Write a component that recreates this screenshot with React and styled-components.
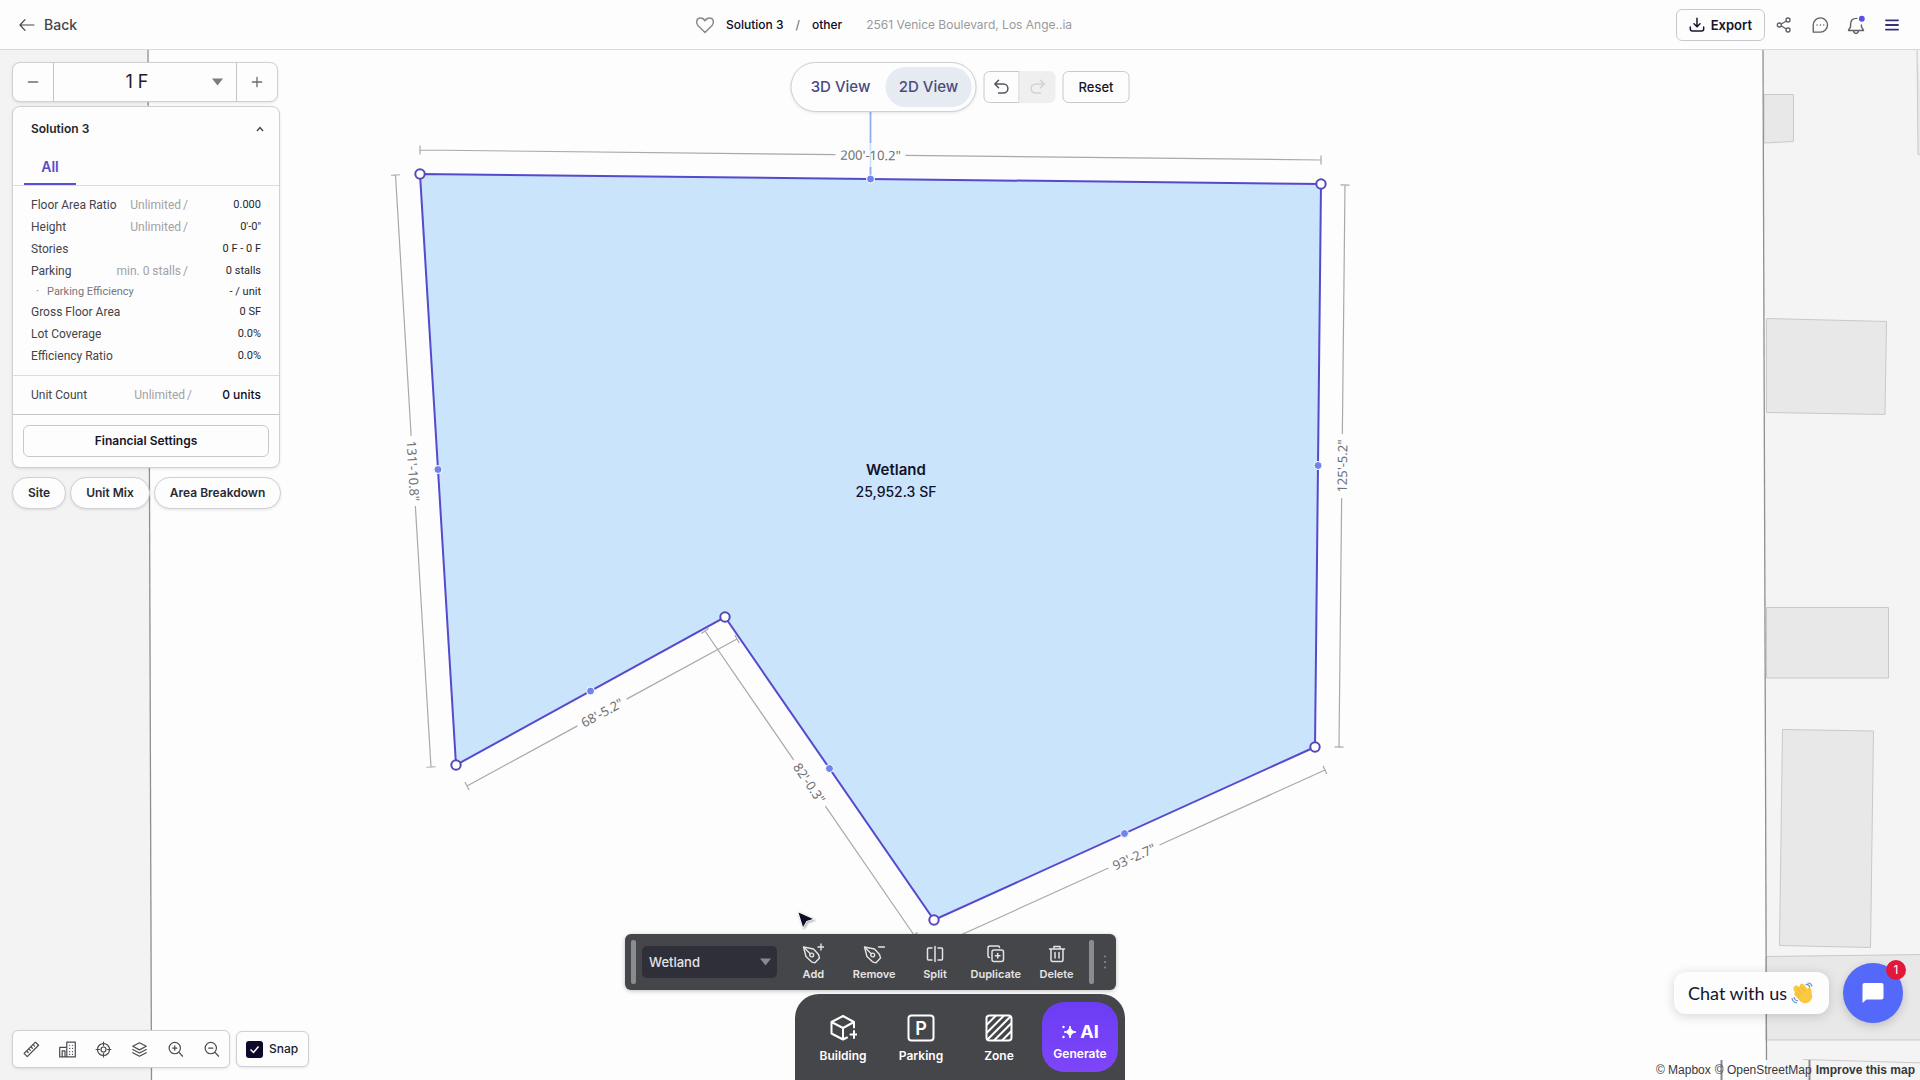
import React from "react";
import styled, { createGlobalStyle, css } from "styled-components";

const GlobalStyle = createGlobalStyle`
  *, *::before, *::after { box-sizing: border-box; }
  html, body, #root { height: 100%; margin: 0; }
  body {
    font-family: Inter, "Liberation Sans", sans-serif;
    font-size: 12px;
    line-height: 16px;
    color: #20202a;
    background: #fdfdfd;
    overflow: hidden;
  }
  button, input, select { font: inherit; color: inherit; margin: 0; }
  button { cursor: pointer; }
`;

/* ---------- shell ---------- */

const Page = styled.div`
  display: flex;
  flex-direction: column;
  height: 100vh;
`;

const Header = styled.header`
  display: grid;
  grid-template-columns: 1fr auto 1fr;
  align-items: center;
  height: 50px;
  flex: none;
  padding: 0 17px 0 19px;
  background: #fdfdfd;
  border-bottom: 1px solid #d9d9d9;
`;

const Workspace = styled.main`
  position: relative;
  flex: 1;
  min-height: 0;
`;

const flatButton = css`
  display: flex;
  align-items: center;
  justify-content: center;
  padding: 0;
  border: 0;
  background: none;
`;

const BackButton = styled.button`
  ${flatButton}
  justify-self: start;
  gap: 9px;
  font-size: 14px;
  font-weight: 500;
  color: #45454b;
`;

const Title = styled.div`
  display: flex;
  align-items: center;
  gap: 10px;
  padding-right: 156px;
  color: #0b0b26;
  font-weight: 500;
`;

const Crumbs = styled.span`
  display: flex;
  gap: 12px;
`;

const Slash = styled.span`
  color: #77777c;
`;

const Address = styled.span`
  padding-left: 14px;
  font-weight: 400;
  color: #9a9a9e;
`;

const Actions = styled.div`
  display: flex;
  align-items: center;
  justify-self: end;
  gap: 14px;
`;

const IconButton = styled.button`
  ${flatButton}
  width: 22px;
  height: 22px;
  color: ${(p) => p.$color || "#606066"};
`;

const ActionIcons = styled.div`
  display: flex;
  gap: 14px;
  margin-left: -6px;
`;

const OutlineButton = styled.button`
  display: flex;
  align-items: center;
  justify-content: center;
  gap: 6px;
  height: 32px;
  padding: 0 ${(p) => p.$pad || 12}px;
  border: 1px solid #c9c9cd;
  border-radius: 6px;
  background: #fdfdfd;
  font-size: ${(p) => p.$size || 12}px;
  font-weight: ${(p) => p.$weight || 500};
  color: #14142a;
`;

/* ---------- map ---------- */

const Canvas = styled.svg`
  position: absolute;
  inset: 0;
  width: 100%;
  height: 100%;
  display: block;
`;

const DimText = styled.text`
  font-family: "Noto Sans", sans-serif;
  font-size: 13px;
  fill: #707074;
  text-anchor: middle;
  dominant-baseline: central;
`;

const ZoneText = styled.text`
  font-size: ${(p) => p.$size}px;
  font-weight: ${(p) => p.$weight};
  fill: #12122c;
  text-anchor: middle;
  dominant-baseline: central;
`;

const GhostLine = styled.path`
  fill: none;
  stroke: #a9a9a9;
  stroke-width: 1.2;
`;

function Dimension({ from, to, label, gap = 70, flip = false }) {
  const [x1, y1] = from;
  const [x2, y2] = to;
  const len = Math.hypot(x2 - x1, y2 - y1);
  const ux = (x2 - x1) / len;
  const uy = (y2 - y1) / len;
  const cx = (x1 + x2) / 2;
  const cy = (y1 + y2) / 2;
  const angle = (Math.atan2(uy, ux) * 180) / Math.PI + (flip ? 180 : 0);
  const h = gap / 2;
  const t = 4.5;
  return (
    <g>
      <GhostLine
        d={`M${x1} ${y1}L${cx - ux * h} ${cy - uy * h}M${cx + ux * h} ${cy + uy * h}L${x2} ${y2}
        M${x1 - uy * t} ${y1 + ux * t}L${x1 + uy * t} ${y1 - ux * t}
        M${x2 - uy * t} ${y2 + ux * t}L${x2 + uy * t} ${y2 - ux * t}`}
      />
      <DimText transform={`translate(${cx} ${cy}) rotate(${angle})`}>{label}</DimText>
    </g>
  );
}

const corners = [[420, 124], [1321, 134], [1315, 697], [934, 870], [725, 567], [456, 715]];

const dimensions = [
  { from: [420, 100], to: [1321, 110], label: "200'-10.2\"" },
  { from: [395.5, 125], to: [431, 717], label: "131'-10.8\"" },
  { from: [1345, 135], to: [1339, 697], label: "125'-5.2\"", flip: true, gap: 64 },
  { from: [467, 736], to: [737, 589], label: "68'-5.2\"", gap: 56 },
  { from: [705, 581], to: [914, 885], label: "82'-0.3\"", gap: 56 },
  { from: [943, 893], to: [1325, 720], label: "93'-2.7\"", gap: 56 },
];

function SiteMap() {
  return (
    <Canvas viewBox="0 0 1920 1030" preserveAspectRatio="xMidYMin slice" aria-label="Site plan">
      <rect width="1920" height="1030" fill="#fdfdfd" />
      <path d="M0 0H148L151.500 1030H0Z" fill="#f3f3f3" />
      <path d="M148 0L151.500 1030" stroke="#8f8f93" strokeWidth="1.300" />
      <path d="M1763 0H1920V1030H1766Z" fill="#f4f4f4" />
      <g fill="#e8e8e8" stroke="#c9c9c9">
        <path d="M1764 44.500H1793.500V91.500L1764 93Z" />
        <path d="M1766.500 268.500L1886.500 271.500L1885 364.500L1766.500 362.500Z" />
        <path d="M1766.500 557.500H1888.500V628H1766.500Z" />
        <path d="M1782.500 679.500L1873.500 681L1870.500 897.500L1779.500 895.500Z" />
        <path d="M1917 -5L1918 104.500H1925" />
        <path d="M1766 906.500L1925 904.500V990H1766Z" />
        <path d="M1803 1009.500L1925 1013" fill="none" />
      </g>
      <path d="M1763 0L1766.500 1010" stroke="#8f8f93" strokeWidth="1.300" />
      <path d="M1721.500 1010V1030M1809.500 1010V1030" stroke="#88888c" strokeWidth="2" />

      <path d="M870.500 50V93" stroke="#8fb0ee" strokeWidth="1.800" />
      <path d="M870.500 93V129" stroke="#cfe3f8" strokeWidth="1.800" />
      <path d="M870.500 117V129" stroke="#8fb0ee" strokeWidth="1.800" />
      {dimensions.map((d) => (
        <Dimension key={d.label} {...d} />
      ))}
      <polygon points={corners.join(" ")} fill="#cae4fc" stroke="#5549cc" strokeWidth="2" />
      {corners.map(([x, y], i) => {
        const [nx, ny] = corners[(i + 1) % corners.length];
        return <circle key={i} cx={(x + nx) / 2} cy={(y + ny) / 2} r="4" fill="#7084ea" stroke="#fff" />;
      })}
      {corners.map(([x, y]) => (
        <circle key={x} cx={x} cy={y} r="4.700" fill="#fff" stroke="#5549b8" strokeWidth="2" />
      ))}
      <ZoneText x="896" y="419" $size={15} $weight={600}>Wetland</ZoneText>
      <ZoneText x="896" y="441" $size={14} $weight={500}>25,952.3 SF</ZoneText>
      <path
        d="M798.500 862.500L813 869L806.500 871L803 877Z"
        fill="#0d0d26"
        stroke="#fff"
        strokeWidth="1.500"
        paintOrder="stroke"
        filter="drop-shadow(1px 1px 1px rgba(0,0,0,.35))"
      />
    </Canvas>
  );
}

/* ---------- left column ---------- */

const card = css`
  background: #fdfdfd;
  border: 1px solid #cfcfd4;
  box-shadow: 0 1px 3px rgba(0, 0, 0, 0.1);
`;

const Side = styled.aside`
  position: absolute;
  top: 12px;
  left: 12px;
  display: flex;
  flex-direction: column;
  width: 268px;
`;

const Stepper = styled.div`
  ${card}
  display: grid;
  grid-template-columns: 40px 1fr 40px;
  height: 40px;
  width: 266px;
  margin-bottom: 4px;
  border-radius: 8px;
`;

const StepButton = styled.button`
  ${flatButton}
  color: #6d6d72;
`;

const SelectWrap = styled.div`
  display: grid;
  align-items: center;
  grid-template-areas: "field";
  & > * { grid-area: field; }
  & > svg { justify-self: end; margin-right: ${(p) => p.$inset}px; pointer-events: none; }
`;

const FloorSelectWrap = styled(SelectWrap)`
  border: 0 solid #c4c4c9;
  border-width: 0 1px;
`;

const FloorSelect = styled.select`
  appearance: none;
  width: 100%;
  height: 100%;
  padding: 0 16px 0 0;
  border: 0;
  background: none;
  font-size: 18px;
  text-align: center;
  text-align-last: center;
`;

const Panel = styled.section`
  ${card}
  border-radius: 8px;
`;

const PanelHead = styled.div`
  display: flex;
  align-items: center;
  justify-content: space-between;
  height: 44px;
  padding: 0 8px 0 18px;
`;

const PanelTitle = styled.h2`
  margin: 0;
  font-size: 12px;
  font-weight: 600;
  color: #26262e;
`;

const Tabs = styled.div`
  display: flex;
  padding: 0 11px;
  border-bottom: 1px solid #dcdce0;
`;

const Tab = styled.button`
  ${flatButton}
  width: 52px;
  height: 34px;
  border-bottom: 2px solid #5a50d6;
  font-size: 14px;
  font-weight: 600;
  color: #584cc8;
`;

const Stats = styled.table`
  width: 100%;
  border-collapse: collapse;
  table-layout: fixed;
  font-family: Roboto, sans-serif;
`;

const StatsBlock = styled.div`
  padding: 8px 18px;
  border-bottom: 1px solid ${(p) => p.$line};
`;

const StatRow = styled.tr`
  height: ${(p) => (p.$sub ? 19 : 22)}px;
`;

const StatName = styled.th`
  padding: 0 0 0 ${(p) => (p.$sub ? 5 : 0)}px;
  width: 84px;
  text-align: left;
  white-space: nowrap;
  font-size: ${(p) => (p.$sub ? 11 : 12)}px;
  font-weight: 400;
  color: ${(p) => (p.$sub ? "#77777c" : "#44444a")};
`;

const Bullet = styled.span`
  display: inline-block;
  width: 11px;
`;

const StatLimit = styled.td`
  padding: 0;
  text-align: right;
  white-space: nowrap;
  color: #a2a2a6;
`;

const LimitSlash = styled.span`
  padding-left: 2px;
`;

const StatValue = styled.td`
  width: ${(p) => (p.$strong ? 69 : 73)}px;
  padding: 0;
  text-align: right;
  white-space: nowrap;
  font-family: ${(p) => (p.$strong ? "Inter" : "Roboto")}, sans-serif;
  font-size: ${(p) => (p.$strong ? 12 : 11)}px;
  font-weight: ${(p) => (p.$strong ? 500 : 400)};
  color: ${(p) => (p.$strong ? "#0d0d2a" : "#26262e")};
`;

const PanelFoot = styled.div`
  display: grid;
  padding: 10px;
`;

const Pills = styled.div`
  display: flex;
  gap: 4px;
  margin-top: 9px;
`;

const Pill = styled.button`
  ${card}
  height: 32px;
  padding: 0 15px;
  border-radius: 16px;
  font-weight: 600;
  white-space: nowrap;
  color: #2a2a34;
`;

const stats = [
  ["Floor Area Ratio", "Unlimited", "0.000"],
  ["Height", "Unlimited", "0'-0\""],
  ["Stories", "", "0 F - 0 F"],
  ["Parking", "min. 0 stalls", "0 stalls"],
  ["Parking Efficiency", "", "- / unit", true],
  ["Gross Floor Area", "", "0 SF"],
  ["Lot Coverage", "", "0.0%"],
  ["Efficiency Ratio", "", "0.0%"],
];

function Stat({ name, limit, value, sub, strong }) {
  return (
    <StatRow $sub={sub}>
      <StatName scope="row" $sub={sub}>{sub && <Bullet>·</Bullet>}{name}</StatName>
      <StatLimit>{limit}{limit && <LimitSlash>/</LimitSlash>}</StatLimit>
      <StatValue $strong={strong}>{value}</StatValue>
    </StatRow>
  );
}

/* ---------- top controls ---------- */

const TopBar = styled.div`
  position: absolute;
  top: 12px;
  left: 50%;
  transform: translateX(-50%);
  display: flex;
  align-items: center;
  gap: 7px;
`;

const Toggle = styled.div`
  ${card}
  display: flex;
  height: 50px;
  padding: 4px;
  border-radius: 25px;
`;

const ToggleItem = styled.button`
  ${flatButton}
  width: ${(p) => (p.$on ? 86 : 90)}px;
  border-radius: 20px;
  background: ${(p) => (p.$on ? "#e6eaf1" : "none")};
  font-size: 15px;
  font-weight: 500;
  color: #4a4a80;
`;

const History = styled.div`
  display: flex;
  height: 32px;
`;

const HistoryButton = styled.button`
  ${flatButton}
  width: 36px;
  border: 1px solid ${(p) => (p.disabled ? "#efefef" : "#c9c9cd")};
  border-radius: ${(p) => (p.disabled ? "0 6px 6px 0" : "6px 0 0 6px")};
  background: ${(p) => (p.disabled ? "#efefef" : "#fdfdfd")};
  color: ${(p) => (p.disabled ? "#d2d2d4" : "#55555c")};
`;

/* ---------- bottom controls ---------- */

const BottomLeft = styled.div`
  position: absolute;
  left: 12px;
  bottom: 12px;
  display: flex;
  align-items: center;
  gap: 6px;
`;

const Tools = styled.div`
  ${card}
  display: flex;
  align-items: center;
  gap: 14px;
  height: 38px;
  padding: 0 7px;
  border-radius: 6px;
`;

const Snap = styled.label`
  ${card}
  display: flex;
  align-items: center;
  gap: 6px;
  height: 36px;
  padding: 0 10px 0 9px;
  border-radius: 6px;
  font-weight: 500;
`;

const CheckWrap = styled.span`
  display: grid;
  place-items: center;
  grid-template-areas: "box";
  & > * { grid-area: box; }
  & > svg { pointer-events: none; }
`;

const CheckInput = styled.input`
  appearance: none;
  width: 17px;
  height: 17px;
  border-radius: 3px;
  background: #0c0a28;
`;

const EditBar = styled.div`
  position: absolute;
  left: calc(50% - 335px);
  bottom: 90px;
  display: flex;
  align-items: center;
  width: 491px;
  height: 56px;
  padding-left: 6px;
  border-radius: 6px;
  background: #454649;
  box-shadow: 0 1px 4px rgba(0, 0, 0, 0.25);
  color: #e4e4e6;
`;

const Grip = styled.span`
  flex: none;
  width: 5px;
  height: 44px;
  border-radius: 2px;
  background: #8b8b90;
`;

const TypeSelectWrap = styled(SelectWrap)`
  flex: none;
  width: 135px;
  height: 32px;
  margin: 0 0 0 6px;
  border-radius: 5px;
  background: #2f2f39;
`;

const TypeSelect = styled.select`
  appearance: none;
  height: 100%;
  padding: 0 24px 0 7px;
  border: 0;
  background: none;
  font-size: 13px;
  font-weight: 500;
`;

const EditActions = styled.div`
  display: flex;
  flex: 1;
  padding: 0 2px 0 6px;
`;

const EditButton = styled.button`
  ${flatButton}
  flex: 1;
  flex-direction: column;
  gap: 1px;
  font-size: 11px;
  font-weight: 600;
`;

const Dock = styled.nav`
  position: absolute;
  left: 50%;
  bottom: 0;
  transform: translateX(-50%);
  display: flex;
  align-items: center;
  width: 330px;
  height: 86px;
  padding: 0 7px 0 9px;
  border-radius: 24px 24px 0 0;
  background: #454649;
  color: #fff;
`;

const DockButton = styled.button`
  ${flatButton}
  flex: none;
  flex-direction: column;
  gap: 6px;
  width: 78px;
  height: 70px;
  padding-top: 4px;
  font-size: 12px;
  font-weight: 600;
`;

const GenerateButton = styled(DockButton)`
  gap: 4px;
  width: 76px;
  margin-left: auto;
  border-radius: 22px;
  background: linear-gradient(#6a3df5, #7f45f8);
`;

const AiMark = styled.span`
  display: flex;
  align-items: center;
  gap: 4px;
  padding-top: 6px;
  font-size: 18px;
  line-height: 20px;
  font-weight: 700;
`;

/* ---------- chat and credits ---------- */

const Chat = styled.div`
  position: absolute;
  right: 17px;
  bottom: 57px;
  display: flex;
  align-items: center;
  gap: 14px;
`;

const ChatBubble = styled.div`
  display: flex;
  align-items: center;
  gap: 4px;
  height: 42px;
  padding: 0 16px 0 14px;
  border-radius: 12px;
  background: #fdfdfd;
  box-shadow: 0 2px 12px rgba(0, 0, 0, 0.16);
  font-family: Lato, sans-serif;
  font-size: 18px;
  line-height: 24px;
  color: #14142e;
`;

const ChatButton = styled.button`
  ${flatButton}
  position: relative;
  width: 60px;
  height: 60px;
  border-radius: 50%;
  background: #5468fa;
  box-shadow: 0 3px 10px rgba(0, 0, 0, 0.18);
`;

const Badge = styled.span`
  position: absolute;
  top: -3px;
  right: -3px;
  width: 20px;
  height: 20px;
  border-radius: 50%;
  background: #e2183a;
  color: #fff;
  line-height: 20px;
`;

const Credits = styled.div`
  position: absolute;
  right: 5px;
  bottom: 2px;
  display: flex;
  gap: 4px;
  font-family: "Liberation Sans", Arial, sans-serif;
  font-size: 12px;
  color: #38383c;
`;

const CreditLink = styled.a`
  color: inherit;
  text-decoration: none;
  font-weight: ${(p) => (p.$bold ? 700 : 400)};
`;

/* ---------- icons ---------- */

function Icon({ size = 20, box = 24, w = 1.6, children }) {
  return (
    <svg
      width={size}
      height={size}
      viewBox={`0 0 ${box} ${box}`}
      fill="none"
      stroke="currentColor"
      strokeWidth={w}
      strokeLinecap="round"
      strokeLinejoin="round"
      aria-hidden="true"
    >
      {children}
    </svg>
  );
}

const Caret = ({ color }) => (
  <svg width="11" height="8" viewBox="0 0 11 8" aria-hidden="true">
    <path d="M0 0.500H11L5.500 7.500Z" fill={color} />
  </svg>
);

const Nib = ({ children }) => (
  <Icon size={22} box={22} w={1.4}>
    <path d="M1.500 4L11.500 6L16.500 11.500L17.500 15L13 19.800L9.500 18.800L4 13.500Z" />
    <circle cx="9.700" cy="12" r="1.900" />
    <path d="M2 4.500L8.300 10.700" />
    {children}
  </Icon>
);

const tools = [
  ["Measure", <g><path d="M1.500 17.500L17.500 1.500L22 6L6 22Z" /><path d="M14.500 5.500l1.800 1.800M11.500 8.500l1.800 1.800M8.500 11.500l1.800 1.800M5.500 14.500l1.800 1.800" /></g>],
  ["Buildings", <g><path d="M11 22.500V1.500H23V22.500ZM11 9H1V22.500H11M4.500 22V14H8.500V22" /><path d="M15 6h.1M19 6h.1M15 10.500h.1M19 10.500h.1M15 15h.1M19 15h.1M15 19h.1M19 19h.1" /></g>],
  ["Locate", <g><circle cx="12" cy="12" r="8.500" /><circle cx="12" cy="12" r="3.500" /><path d="M12 1.500v5M12 17.500v5M1.500 12h5M17.500 12h5" /></g>],
  ["Layers", <g><path d="M12 2.500L21.500 7.500L12 12.500L2.500 7.500Z" /><path d="M2.500 12L12 17L21.500 12M2.500 16.500L12 21.500L21.500 16.500" /></g>],
  ["Zoom in", <g><circle cx="11" cy="10" r="8" /><path d="M17 16l5 5.500M11 7v6M8 10h6" /></g>],
  ["Zoom out", <g><circle cx="11" cy="10" r="8" /><path d="M17 16l5 5.500M8 10h6" /></g>],
];

const edits = [
  ["Add", <Nib><path d="M19 1v6M16 4h6" /></Nib>],
  ["Remove", <Nib><path d="M15.500 4h6" /></Nib>],
  ["Split", <Icon size={22} box={22} w={1.5}><path d="M8 5H4.500Q3.500 5 3.500 6V16Q3.500 17 4.500 17H8M14 5H17.500Q18.500 5 18.500 6V16Q18.500 17 17.500 17H14M11 3.500V18.500" /></Icon>],
  ["Duplicate", <Icon size={22} box={22} w={1.5}><rect x="7" y="7" width="11.500" height="11.500" rx="2" /><path d="M4.500 14.500Q3 14.500 3 13V5Q3 3 5 3H13Q14.500 3 14.500 4.500M12.700 10.500v4.500M10.500 12.700h4.500" /></Icon>],
  ["Delete", <Icon size={22} box={22} w={1.5}><path d="M3.500 6H18.500M8 6V3.500H14V6M5 6V17Q5 18.500 6.500 18.500H15.500Q17 18.500 17 17V6M9 9.500V15M13 9.500V15" /></Icon>],
];

const docks = [
  ["Building", <Icon size={28} box={28} w={2}><path d="M25 13.500V8L14 2L2.500 8V19.500L14 25.500L18 23.500M2.500 8L14 14L25 8M14 14V25.500M25 17v7M21.500 20.500h7" /></Icon>],
  ["Parking", <Icon size={28} box={28} w={2}><rect x="1.500" y="1.500" width="25" height="25" rx="3" /><text x="14" y="20.500" textAnchor="middle" fontSize="18" fontWeight="600" fill="#fff" stroke="none">P</text></Icon>],
  ["Zone", <Icon size={28} box={28} w={2}><rect x="1.500" y="1.500" width="25" height="25" rx="3" /><path d="M2 10.500L10.500 2M2 18.500L18.500 2M3 25L25 3M9.500 26L26 9.500M17.500 26L26 17.500" /></Icon>],
];

const WavingHand = () => (
  <svg width="22" height="22" viewBox="0 0 22 22" aria-hidden="true">
    <path
      d="M3 6L5 4L9 6L10 2.500L12.500 3L17 9L17.500 6.500L19.500 7L20.500 15Q19 20.500 13.500 20.500L10 19L4 12.500L4.500 10.500Z"
      fill="#fbc843"
      stroke="#fbc843"
      strokeWidth="1.500"
      strokeLinejoin="round"
    />
    <path d="M6 6.500L11 11.500M9.500 4.500L14 9.500M5 10.500L9 14.500" stroke="#e8a92e" strokeWidth=".8" fill="none" />
    <path d="M14.500 2.500Q18 2 19 5.500M16.500 1Q20.500 1 21 4.500M3 15Q3.500 18.500 7 19M1 16Q1.500 20.500 6 21" stroke="#5f95cf" strokeWidth="1.200" fill="none" />
  </svg>
);

/* ---------- app ---------- */

export default function App() {
  return (
    <Page>
      <GlobalStyle />
      <Header>
        <BackButton>
          <Icon size={16} w={1.8}><path d="M1.500 12H22.500M9 4L1.500 12L9 20" /></Icon>
          Back
        </BackButton>
        <Title>
          <IconButton $color="#8a8a8e" aria-label="Favorite">
            <Icon size={20} w={1.8}><path d="M12 21L3.500 12.500C.5 9 2 3.500 6.500 3.500C9 3.500 11 5 12 7C13 5 15 3.500 17.500 3.500C22 3.500 23.500 9 20.500 12.500Z" /></Icon>
          </IconButton>
          <Crumbs><span>Solution 3</span><Slash>/</Slash><span>other</span></Crumbs>
          <Address>2561 Venice Boulevard, Los Ange..ia</Address>
        </Title>
        <Actions>
          <OutlineButton $weight={600} $size={13}>
            <Icon size={16} w={2.2}><path d="M12 2V14M7.500 10L12 14.500L16.500 10M2 15V18Q2 21 5 21H19Q22 21 22 18V15" /></Icon>
            Export
          </OutlineButton>
          <ActionIcons>
            <IconButton aria-label="Share">
              <Icon size={16} w={2}><circle cx="18" cy="4.500" r="3" /><circle cx="5" cy="12" r="3" /><circle cx="18" cy="19.500" r="3" /><path d="M8 10.500L15.500 6M8 13.500L15.500 18" /></Icon>
            </IconButton>
            <IconButton aria-label="Comments">
              <Icon size={18} w={1.8}><path d="M3 21.500V12A9.500 9.500 0 1 1 12.500 21.500Z" /><path d="M8 12h.1M12.500 12h.1M17 12h.1" /></Icon>
            </IconButton>
            <IconButton aria-label="Notifications">
              <Icon size={20} w={1.7}>
                <path d="M13 4Q5.500 4 5.500 11V14L3 18.500H21L18.500 14V12M9 19Q9.500 22 12 22T15 19" />
                <circle cx="19" cy="4.500" r="3.500" fill="#5b4fe0" stroke="none" />
              </Icon>
            </IconButton>
            <IconButton $color="#35307a" aria-label="Menu">
              <Icon size={16} w={2.8}><path d="M3 5H21M3 12H21M3 19H21" /></Icon>
            </IconButton>
          </ActionIcons>
        </Actions>
      </Header>

      <Workspace>
        <SiteMap />

        <Side>
          <Stepper>
            <StepButton aria-label="Floor down"><Icon size={16} w={2}><path d="M5 12H19" /></Icon></StepButton>
            <FloorSelectWrap $inset={13}>
              <FloorSelect aria-label="Floor" defaultValue="1 F"><option>1 F</option></FloorSelect>
              <Caret color="#7b7b80" />
            </FloorSelectWrap>
            <StepButton aria-label="Floor up"><Icon size={16} w={2}><path d="M5 12H19M12 5V19" /></Icon></StepButton>
          </Stepper>

          <Panel>
            <PanelHead>
              <PanelTitle>Solution 3</PanelTitle>
              <IconButton aria-label="Collapse">
                <svg width="8" height="6" viewBox="0 0 8 6" aria-hidden="true"><path d="M1 5L4 1.500L7 5" fill="none" stroke="#44444a" strokeWidth="1.400" /></svg>
              </IconButton>
            </PanelHead>
            <Tabs role="tablist"><Tab role="tab" aria-selected="true">All</Tab></Tabs>
            <StatsBlock $line="#dcdce0">
              <Stats>
                <tbody>
                  {stats.map(([name, limit, value, sub]) => (
                    <Stat key={name} name={name} limit={limit} value={value} sub={sub} />
                  ))}
                </tbody>
              </Stats>
            </StatsBlock>
            <StatsBlock $line="#c4c4c8">
              <Stats>
                <tbody>
                  <Stat name="Unit Count" limit="Unlimited" value="0 units" strong />
                </tbody>
              </Stats>
            </StatsBlock>
            <PanelFoot><OutlineButton $weight={600}>Financial Settings</OutlineButton></PanelFoot>
          </Panel>

          <Pills>
            <Pill>Site</Pill>
            <Pill>Unit Mix</Pill>
            <Pill>Area Breakdown</Pill>
          </Pills>
        </Side>

        <TopBar>
          <Toggle>
            <ToggleItem>3D View</ToggleItem>
            <ToggleItem $on>2D View</ToggleItem>
          </Toggle>
          <History>
            <HistoryButton aria-label="Undo"><Icon size={18} w={2}><path d="M8 13L3 8L8 3M3 8H14.500A6 6 0 0 1 14.500 20H8" /></Icon></HistoryButton>
            <HistoryButton disabled aria-label="Redo"><Icon size={18} w={2}><path d="M16 13L21 8L16 3M21 8H9.500A6 6 0 0 0 9.500 20H16" /></Icon></HistoryButton>
          </History>
          <OutlineButton $size={13} $pad={15}>Reset</OutlineButton>
        </TopBar>

        <BottomLeft>
          <Tools>
            {tools.map(([name, art]) => (
              <IconButton key={name} aria-label={name} $color="#4a4a50"><Icon size={17} w={1.7}>{art}</Icon></IconButton>
            ))}
          </Tools>
          <Snap>
            <CheckWrap>
              <CheckInput type="checkbox" defaultChecked />
              <svg width="11" height="9" viewBox="0 0 11 9" aria-hidden="true"><path d="M1.500 4.500L4.500 7.500L9.500 1.500" fill="none" stroke="#fff" strokeWidth="1.500" /></svg>
            </CheckWrap>
            Snap
          </Snap>
        </BottomLeft>

        <EditBar>
          <Grip />
          <TypeSelectWrap $inset={6}>
            <TypeSelect aria-label="Zone type" defaultValue="Wetland"><option>Wetland</option></TypeSelect>
            <Caret color="#88888e" />
          </TypeSelectWrap>
          <EditActions>
            {edits.map(([name, art]) => <EditButton key={name}>{art}{name}</EditButton>)}
          </EditActions>
          <Grip />
          <IconButton aria-label="More" $color="#88888e"><Icon size={22} box={22} w={2}><path d="M11 5.500h.1M11 11h.1M11 16.500h.1" /></Icon></IconButton>
        </EditBar>

        <Dock>
          {docks.map(([name, art]) => <DockButton key={name}>{art}{name}</DockButton>)}
          <GenerateButton>
            <AiMark>
              <svg width="15" height="16" viewBox="0 0 15 16" aria-hidden="true">
                <path d="M9 2Q9.500 7.500 15 8Q9.500 8.500 9 14Q8.500 8.500 3 8Q8.500 7.500 9 2Z" fill="#fff" stroke="#fff" />
                <circle cx="2.500" cy="3" r="1.200" fill="#fff" /><circle cx="2.500" cy="13" r="1.200" fill="#fff" />
              </svg>
              AI
            </AiMark>
            Generate
          </GenerateButton>
        </Dock>

        <Chat>
          <ChatBubble>Chat with us <WavingHand /></ChatBubble>
          <ChatButton aria-label="Open chat">
            <svg width="22" height="20" viewBox="0 0 22 20" aria-hidden="true"><path d="M2.500 0H19.500Q21.500 0 21.500 2V14.500Q21.500 16.500 19.500 16.500H4.500L.5 20V2Q.5 0 2.500 0Z" fill="#fff" /></svg>
            <Badge>1</Badge>
          </ChatButton>
        </Chat>

        <Credits>
          <CreditLink href="#mapbox">© Mapbox</CreditLink>
          <CreditLink href="#osm">© OpenStreetMap</CreditLink>
          <CreditLink href="#improve" $bold>Improve this map</CreditLink>
        </Credits>
      </Workspace>
    </Page>
  );
}
